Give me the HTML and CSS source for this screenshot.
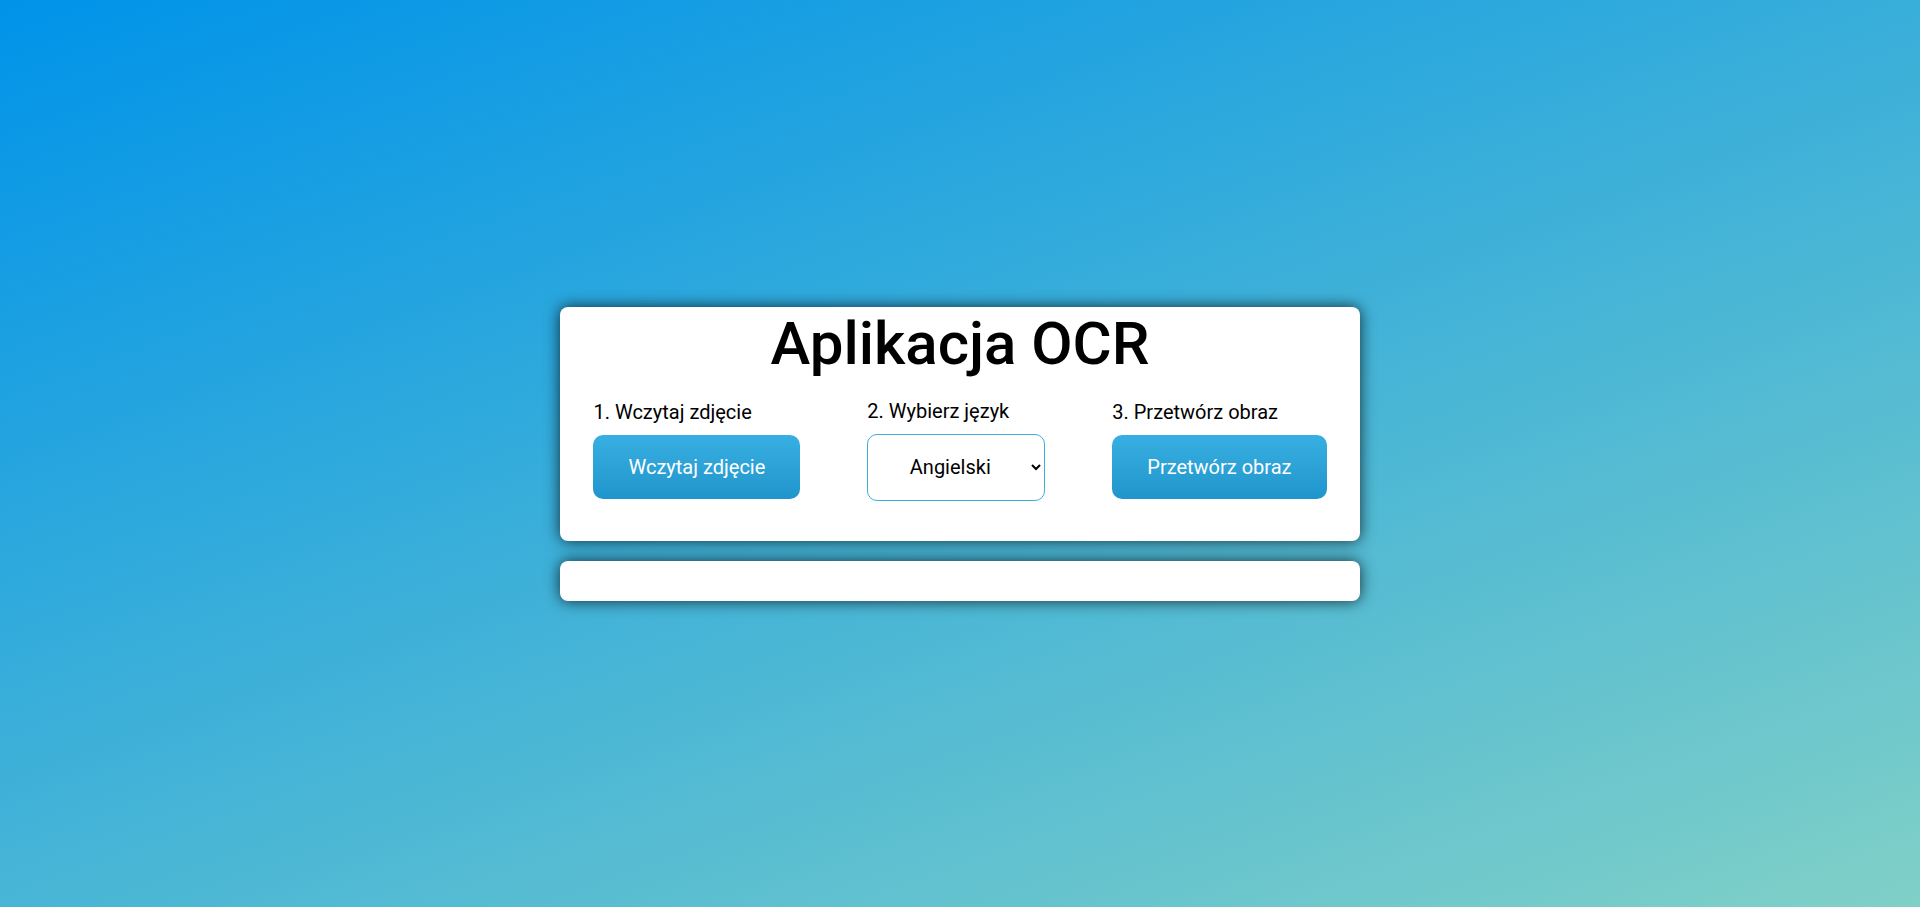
FILE: index.html
```html
<!DOCTYPE html>
<html lang="pl">
<head>
<meta charset="utf-8">
<title>Aplikacja OCR</title>
<link rel="stylesheet" href="styles.css">
</head>
<body>
<main class="app">
  <section class="card panel">
    <h1 class="title">Aplikacja OCR</h1>
    <div class="steps">
      <div class="step">
        <label class="step-label">1. Wczytaj zdjęcie</label>
        <button class="btn" type="button">Wczytaj zdjęcie</button>
      </div>
      <div class="step">
        <label class="step-label" for="lang">2. Wybierz język</label>
        <select class="lang" id="lang">
          <option>Angielski</option>
          <option>Polski</option>
        </select>
      </div>
      <div class="step">
        <label class="step-label">3. Przetwórz obraz</label>
        <button class="btn" type="button">Przetwórz obraz</button>
      </div>
    </div>
  </section>
  <section class="card result"></section>
</main>
</body>
</html>
```

FILE: styles.css
```css
html, body {
  margin: 0;
  height: 100%;
}
body {
  font-family: Roboto, "Noto Sans", Arial, sans-serif;
  background-color: #0093E9;
  background-image: linear-gradient(160deg, #0093E9 0%, #80D0C7 100%);
  color: #000;
}
.app {
  height: 100vh;
  display: flex;
  flex-direction: column;
  align-items: center;
  justify-content: center;
  gap: 20px;
}
.card {
  width: 800px;
  background: #fff;
  border-radius: 8px;
  box-shadow: 0 0 15px rgba(0, 0, 0, 0.75);
}
.panel {
  padding: 1px 0 40px;
}
.title {
  margin: 0 0 20px;
  text-align: center;
  font-size: 60px;
  font-weight: 500;
  line-height: normal;
}
.steps {
  display: flex;
  justify-content: space-around;
  align-items: center;
}
.step {
  display: flex;
  flex-direction: column;
  align-items: flex-start;
}
.step-label {
  font-size: 20px;
  margin-bottom: 11px;
}
.btn {
  height: 64px;
  padding: 0 35px;
  border: none;
  border-radius: 10px;
  background: linear-gradient(to bottom, #38afe3, #2095cb);
  color: #fff;
  font-family: Roboto, sans-serif;
  font-size: 20px;
  cursor: pointer;
}
.lang {
  width: 178px;
  height: 67px;
  border: 1px solid #3daee0;
  border-radius: 10px;
  background: #fff;
  font-family: Roboto, sans-serif;
  font-size: 20px;
  text-align: center;
  color: #000;
}
.result {
  height: 40px;
}
```
